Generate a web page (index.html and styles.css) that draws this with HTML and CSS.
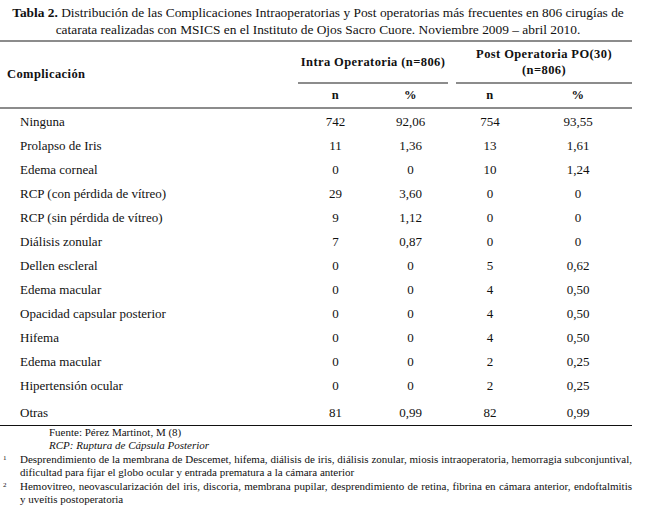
FILE: index.html
```html
<!DOCTYPE html>
<html lang="es">
<head>
<meta charset="utf-8">
<link rel="stylesheet" href="styles.css">
</head>
<body>
<div class="page">
  <p class="caption"><b>Tabla 2.</b> Distribución de las Complicaciones Intraoperatorias y Post operatorias más frecuentes en 806 cirugías de<br>catarata realizadas con MSICS en el Instituto de Ojos Sacro Cuore. Noviembre 2009 – abril 2010.</p>
  <table class="data">
    <colgroup>
      <col class="c-label"><col class="c-in"><col class="c-ip"><col class="c-gap"><col class="c-pn"><col class="c-pp">
    </colgroup>
    <thead>
      <tr class="h1">
        <th class="th-label" rowspan="2">Complicación</th>
        <th class="grp" colspan="2">Intra Operatoria (n=806)</th>
        <th class="gap"></th>
        <th class="grp" colspan="2">Post Operatoria PO(30)<br>(n=806)</th>
      </tr>
      <tr class="h2">
        <th>n</th><th>%</th><th class="gap"></th><th>n</th><th>%</th>
      </tr>
    </thead>
    <tbody>
      <tr><td>Ninguna</td><td>742</td><td>92,06</td><td></td><td>754</td><td>93,55</td></tr>
      <tr><td>Prolapso de Iris</td><td>11</td><td>1,36</td><td></td><td>13</td><td>1,61</td></tr>
      <tr><td>Edema corneal</td><td>0</td><td>0</td><td></td><td>10</td><td>1,24</td></tr>
      <tr><td>RCP (con pérdida de vítreo)</td><td>29</td><td>3,60</td><td></td><td>0</td><td>0</td></tr>
      <tr><td>RCP (sin pérdida de vítreo)</td><td>9</td><td>1,12</td><td></td><td>0</td><td>0</td></tr>
      <tr><td>Diálisis zonular</td><td>7</td><td>0,87</td><td></td><td>0</td><td>0</td></tr>
      <tr><td>Dellen escleral</td><td>0</td><td>0</td><td></td><td>5</td><td>0,62</td></tr>
      <tr><td>Edema macular</td><td>0</td><td>0</td><td></td><td>4</td><td>0,50</td></tr>
      <tr><td>Opacidad capsular posterior</td><td>0</td><td>0</td><td></td><td>4</td><td>0,50</td></tr>
      <tr><td>Hifema</td><td>0</td><td>0</td><td></td><td>4</td><td>0,50</td></tr>
      <tr><td>Edema macular</td><td>0</td><td>0</td><td></td><td>2</td><td>0,25</td></tr>
      <tr><td>Hipertensión ocular</td><td>0</td><td>0</td><td></td><td>2</td><td>0,25</td></tr>
      <tr class="last"><td>Otras</td><td>81</td><td>0,99</td><td></td><td>82</td><td>0,99</td></tr>
    </tbody>
  </table>
  <div class="notes">
    <p class="src">Fuente: Pérez Martinot, M (8)</p>
    <p class="src it">RCP: Ruptura de Cápsula Posterior</p>
    <div class="fn"><span class="mark">1</span><p>Desprendimiento de la membrana de Descemet, hifema, diálisis de iris, diálisis zonular, miosis intraoperatoria, hemorragia subconjuntival, dificultad para fijar el globo ocular y entrada prematura a la cámara anterior</p></div>
    <div class="fn"><span class="mark">2</span><p>Hemovitreo, neovascularización del iris, discoria, membrana pupilar, desprendimiento de retina, fibrina en cámara anterior, endoftalmitis y&nbsp;uveítis postoperatoria</p></div>
  </div>
</div>
</body>
</html>
```
FILE: styles.css
```css
html, body {
  margin: 0;
  padding: 0;
  background: #fff;
}
body {
  font-family: "Liberation Serif", serif;
  color: #111;
}
.page {
  width: 632px;
  padding-top: 4px;
}
.caption {
  margin: 0;
  font-size: 13.4px;
  line-height: 17px;
  text-align: center;
  padding-left: 4px;
  white-space: nowrap;
}
.data {
  border-collapse: collapse;
  width: 632px;
  table-layout: fixed;
  margin-top: 2px;
}
.c-label { width: 298px; }
.c-in { width: 75px; }
.c-ip { width: 75px; }
.c-gap { width: 8px; }
.c-pn { width: 68px; }
.c-pp { width: 108px; }
.data thead tr.h1 th {
  border-top: 2px solid #8c8c8c;
}
.data th {
  font-weight: bold;
  font-size: 12.5px;
  letter-spacing: 0.4px;
  padding: 0;
  text-align: center;
}
.h1 th.grp {
  height: 40px;
  line-height: 16px;
  border-bottom: 2px solid #8c8c8c;
}
.h1 th.gap {
  border-bottom: none;
}
.th-label {
  text-align: left !important;
  padding-left: 7px !important;
  border-bottom: 2px solid #8c8c8c;
}
.h2 th {
  height: 23px;
  border-bottom: 2px solid #8c8c8c;
}
.data td {
  font-size: 13px;
  height: 24px;
  padding: 0;
  text-align: center;
}
.data td:first-child {
  text-align: left;
  padding-left: 20px;
}
.data tbody tr:first-child td {
  padding-top: 1px;
}
.data tr.last td {
  height: 25px;
  padding-top: 2px;
  border-bottom: 1px solid #111;
}
.notes {
  font-size: 11px;
  line-height: 13px;
  padding-top: 0;
}
.notes p {
  margin: 0;
}
.src {
  padding-left: 49px;
}
.it {
  font-style: italic;
}
.fn {
  display: flex;
  margin-top: 1px;
}
.fn + .fn {
  margin-top: 1px;
}
.mark {
  width: 20px;
  flex: none;
  font-size: 7px;
  line-height: 10px;
  padding-left: 3px;
  box-sizing: border-box;
}
.fn p {
  flex: 1;
  text-align: justify;
}
```
